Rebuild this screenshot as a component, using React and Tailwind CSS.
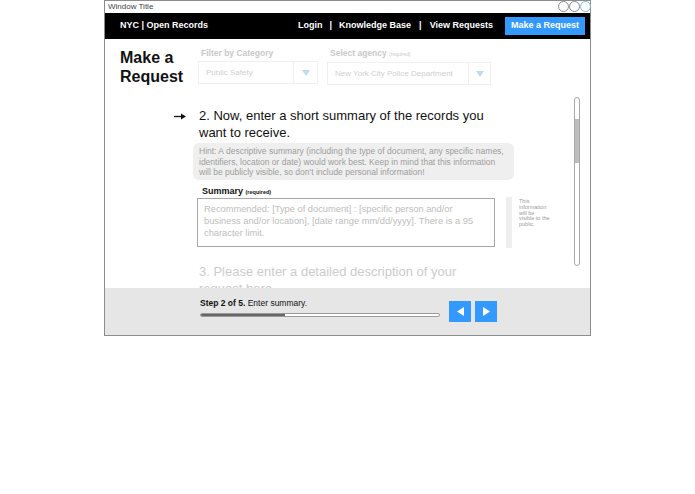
const FONT = { fontFamily: '"Liberation Sans", Arial, sans-serif' }

function Select({ text, width, divider }) {
  return (
    <div className="flex h-[23px] border border-[#f0f0f0]" style={{ width }}>
      <div className="flex items-center pl-[7px] text-[8px] text-[#cfcfcf]" style={{ width: divider }}>
        {text}
      </div>
      <div className="flex flex-1 items-center justify-center border-l border-[#f0f0f0]">
        <svg width="8" height="6" viewBox="0 0 8 6"><path d="M0 0h8L4 6z" fill="#bcdcf0" /></svg>
      </div>
    </div>
  )
}

export default function App() {
  return (
    <div className="w-[695px] h-[494px] bg-white" style={FONT}>
      <div className="ml-[104px] w-[487px] h-[336px] border border-[#8c8c8c] flex flex-col">
        {/* title bar */}
        <div className="h-[11px] flex items-center justify-between pl-[3px]">
          <span className="text-[8px] text-[#444] leading-none">Window Title</span>
          <div className="flex -mr-[1px]">
            <span className="w-[11px] h-[11px] rounded-full border border-[#8c8c8c]" />
            <span className="w-[11px] h-[11px] rounded-full border border-[#8c8c8c]" />
            <span className="w-[11px] h-[11px] rounded-full border border-[#7cb9ea]" />
          </div>
        </div>

        {/* nav */}
        <div className="h-[26px] mt-[1px] bg-black flex items-center text-white text-[9px] font-bold">
          <span className="ml-[15px]">NYC | Open Records</span>
          <div className="ml-auto flex items-center">
            <span>Login</span>
            <span className="mx-[7px]">|</span>
            <span>Knowledge Base</span>
            <span className="mx-[8px]">|</span>
            <span>View Requests</span>
            <span className="ml-[12px] mr-[5px] w-[80px] h-[18px] bg-[#3399ff] flex items-center justify-center">
              Make a Request
            </span>
          </div>
        </div>

        {/* content */}
        <div className="h-[249px] flex flex-col overflow-hidden">
          <div className="flex items-start pt-[9px] h-[58px] shrink-0">
            <h1 className="ml-[15px] w-[78px] text-[16px] leading-[19px] font-bold text-[#111]">
              Make a<br />Request
            </h1>
            <div>
              <div className="pl-[3px] text-[8.5px] leading-[10px] font-bold text-[#c9c9c9] mb-[3px]">Filter by Category</div>
              <Select text="Public Safety" width={120} divider={94} />
            </div>
            <div className="ml-[9px]">
              <div className="pl-[3px] text-[8.5px] leading-[10px] font-bold text-[#c9c9c9] mb-[3px]">
                Select agency <span className="text-[5px] font-normal">(required)</span>
              </div>
              <Select text="New York City Police Department" width={164} divider={140} />
            </div>
          </div>

          <div className="flex flex-1 min-h-0">
            <div className="flex-1 overflow-hidden pl-[69px] pt-[10px]">
              <div className="flex items-start">
                <svg className="mt-[6px] w-[12px] h-[7px] shrink-0" viewBox="0 0 12 7">
                  <path d="M0 3.5h8" stroke="#111" strokeWidth="1.3" />
                  <path d="M7 0.5L12 3.5L7 6.5z" fill="#111" />
                </svg>
                <p className="ml-[13px] text-[13px] leading-[17px] text-[#111]">
                  2. Now, enter a short summary of the records you<br />want to receive.
                </p>
              </div>

              <div className="ml-[19px] mt-[2px] w-[321px] h-[37px] rounded-[6px] bg-[#efefef] px-[6px] pt-[3px] text-[8.5px] leading-[10.5px] text-[#9d9d9d]">
                Hint: A descriptive summary (including the type of document, any specific names,
                identifiers, location or date) would work best. Keep in mind that this information
                will be publicly visible, so don't include personal information!
              </div>

              <div className="ml-[28px] mt-[6px] text-[9px] leading-[11px] font-bold text-[#111]">
                Summary <span className="text-[5.5px]">(required)</span>
              </div>

              <div className="flex ml-[23px]">
                <div className="w-[298px] h-[49px] border border-[#a8a8a8] px-[6px] pt-[4px] text-[9.3px] leading-[12px] text-[#bdbdbd]">
                  Recommended: [Type of document] : [specific person and/or<br />
                  business and/or location], [date range mm/dd/yyyy]. There is a 95<br />
                  character limit.
                </div>
                <div className="ml-[11px] w-[6px] h-[51px] -mt-[1px] bg-[#efefef]" />
                <div className="ml-[7px] pt-[1px] w-[40px] text-[5.5px] leading-[5.8px] text-[#9a9a9a]">
                  This<br />information<br />will be<br />visible to the<br />public.
                </div>
              </div>

              <p className="ml-[25px] mt-[15px] text-[13px] leading-[17px] text-[#cccccc]">
                3. Please enter a detailed description of your<br />request here.
              </p>
            </div>

            <div className="w-[6px] h-[169px] mr-[10px] rounded-full border border-[#a8a8a8] bg-white flex flex-col">
              <div className="mt-[21px] h-[44px] bg-[#bdbdbd]" />
            </div>
          </div>
        </div>

        {/* bottom bar */}
        <div className="h-[47px] bg-[#e6e6e6] flex items-start pl-[95px] pt-[10px]">
          <div className="w-[240px]">
            <div className="text-[8.5px] leading-[11px] text-[#111]">
              <span className="font-bold">Step 2 of 5.</span> Enter summary.
            </div>
            <div className="mt-[4px] h-[4px] rounded-full border border-[#9a9a9a] bg-white overflow-hidden">
              <div className="h-full w-[84px] bg-[#666]" />
            </div>
          </div>
          <div className="ml-[9px] mt-[3px] flex gap-[4px]">
            <div className="w-[22px] h-[21px] bg-[#3399ff] flex items-center justify-center">
              <svg width="7" height="9" viewBox="0 0 7 9"><path d="M7 0v9L0 4.5z" fill="#fff" /></svg>
            </div>
            <div className="w-[22px] h-[21px] bg-[#3399ff] flex items-center justify-center">
              <svg width="7" height="9" viewBox="0 0 7 9"><path d="M0 0v9L7 4.5z" fill="#fff" /></svg>
            </div>
          </div>
        </div>
      </div>
    </div>
  )
}
